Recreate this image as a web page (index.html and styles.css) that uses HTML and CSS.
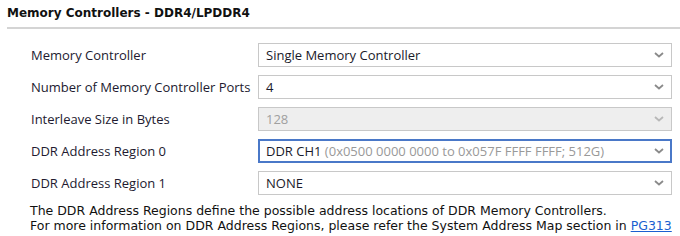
FILE: index.html
```html
<!DOCTYPE html>
<html>
<head>
  <title>Memory Controllers</title>
  <link rel="stylesheet" href="styles.css">
</head>
<body>
  <div class="section">
    <h2 class="section-title">Memory Controllers - DDR4/LPDDR4</h2>

    <div class="form">
      <div class="row">
        <label class="label">Memory Controller</label>
        <div class="select">
          <span class="value">Single Memory Controller</span>
          <svg class="chevron" width="10" height="6" viewBox="0 0 10 6"><path d="M1 1l4 3.5L9 1" fill="none" stroke="currentColor" stroke-width="1.8"/></svg>
        </div>
      </div>

      <div class="row">
        <label class="label">Number of Memory Controller Ports</label>
        <div class="select">
          <span class="value">4</span>
          <svg class="chevron" width="10" height="6" viewBox="0 0 10 6"><path d="M1 1l4 3.5L9 1" fill="none" stroke="currentColor" stroke-width="1.8"/></svg>
        </div>
      </div>

      <div class="row">
        <label class="label">Interleave Size in Bytes</label>
        <div class="select disabled">
          <span class="value">128</span>
          <svg class="chevron" width="10" height="6" viewBox="0 0 10 6"><path d="M1 1l4 3.5L9 1" fill="none" stroke="currentColor" stroke-width="1.8"/></svg>
        </div>
      </div>

      <div class="row">
        <label class="label">DDR Address Region 0</label>
        <div class="select focused">
          <span class="value">DDR CH1 <span class="hint">(0x0500 0000 0000 to 0x057F FFFF FFFF; 512G)</span></span>
          <svg class="chevron" width="10" height="6" viewBox="0 0 10 6"><path d="M1 1l4 3.5L9 1" fill="none" stroke="currentColor" stroke-width="1.8"/></svg>
        </div>
      </div>

      <div class="row">
        <label class="label">DDR Address Region 1</label>
        <div class="select">
          <span class="value">NONE</span>
          <svg class="chevron" width="10" height="6" viewBox="0 0 10 6"><path d="M1 1l4 3.5L9 1" fill="none" stroke="currentColor" stroke-width="1.8"/></svg>
        </div>
      </div>
    </div>

    <p class="info">
      The DDR Address Regions define the possible address locations of DDR Memory Controllers.<br>
      For more information on DDR Address Regions, please refer the System Address Map section in <a href="#">PG313</a>
    </p>
  </div>
</body>
</html>
```

FILE: styles.css
```css
body {
  margin: 0;
  padding: 0;
  background-color: #fff;
  font-family: "Open Sans", sans-serif;
  color: #221a30;
}

.section {
  padding: 4px 0 0 7px;
}

.section-title {
  font-family: "DejaVu Sans", sans-serif;
  font-size: 12px;
  font-weight: bold;
  color: #111;
  margin: 0;
  padding-bottom: 5px;
  border-bottom: 2px solid #d4d4d4;
  line-height: 18px;
}

.form {
  display: flex;
  flex-direction: column;
  gap: 8px;
  padding: 14px 0 0 24px;
}

.row {
  display: flex;
  align-items: center;
}

.label {
  width: 227px;
  font-size: 13px;
}

.select {
  width: 414px;
  height: 24px;
  box-sizing: border-box;
  border: 1px solid #c8c8c8;
  display: flex;
  align-items: center;
  justify-content: space-between;
  padding: 0 7px 0 7px;
  font-size: 13px;
  color: #8a8a8a;
  background-color: #fff;
}

.select .value {
  color: #1a1a2a;
}

.select.disabled {
  background-color: #eee;
  color: #b8b8b8;
}

.select.disabled .value {
  color: #a0a0a0;
}

.select.focused {
  border: 2px solid #4a78c8;
  padding: 0 6px;
}

.hint {
  color: #999;
}

.chevron {
  display: block;
}

.info {
  font-family: "DejaVu Sans", sans-serif;
  font-size: 12.5px;
  line-height: 15px;
  color: #111;
  margin: 8px 0 0 23px;
}

.info a {
  color: #1a5fd0;
}
```
